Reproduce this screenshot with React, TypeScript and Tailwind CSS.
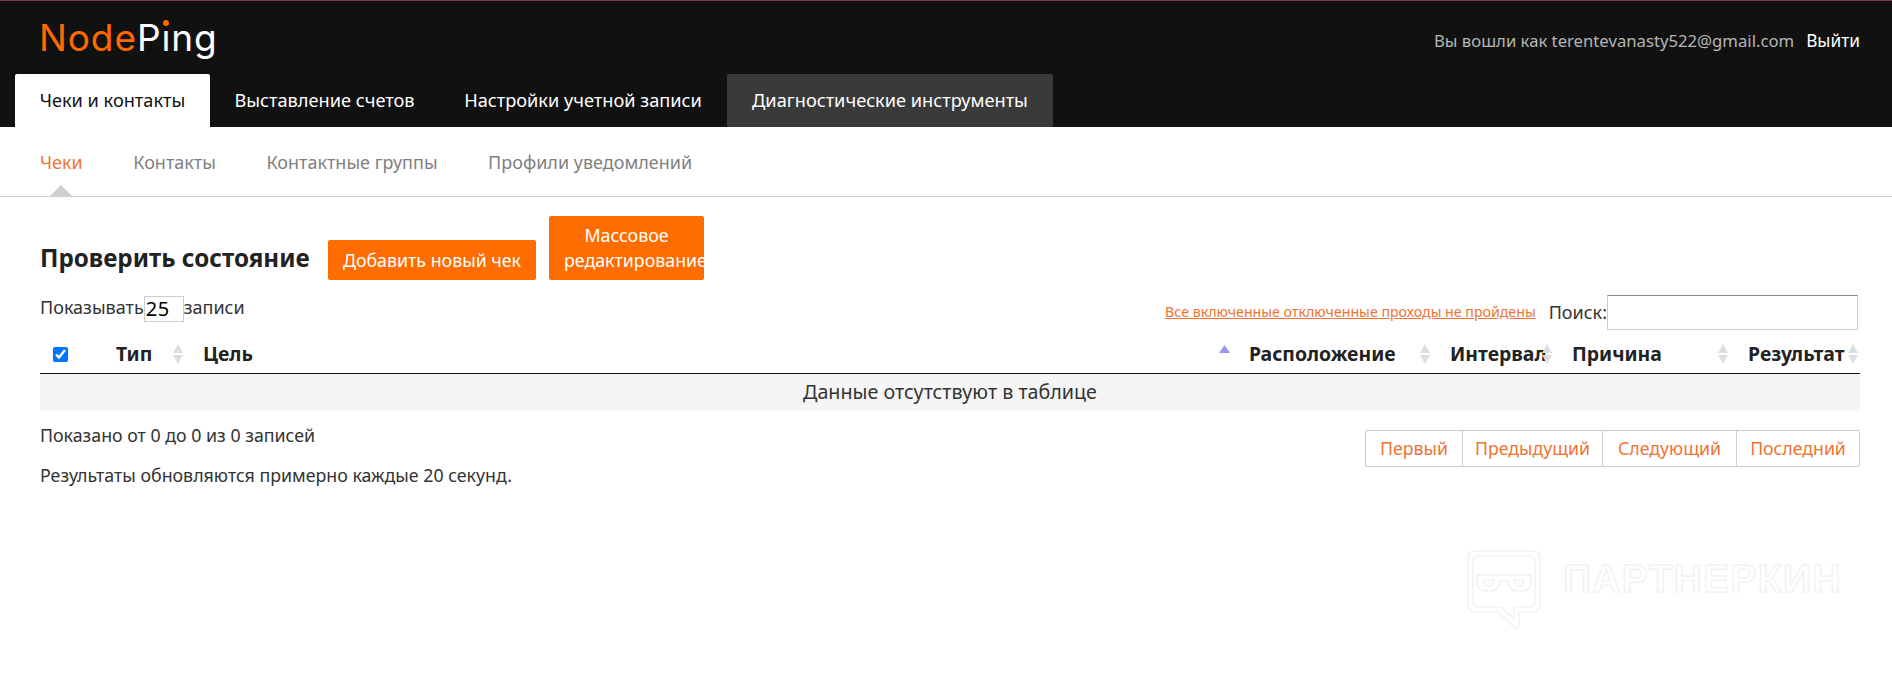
import React from "react";

const font = { fontFamily: '"Noto Sans", "Open Sans", sans-serif' };

function Sort({ active = false }: { active?: boolean }) {
  return active ? (
    <svg className="absolute right-[1px] top-[9px]" width="11" height="8" viewBox="0 0 11 8">
      <path d="M5.5 0 L11 8 H0 Z" fill="#9a9ae8" />
    </svg>
  ) : (
    <svg className="absolute right-[2px] top-[8px]" width="10" height="20" viewBox="0 0 10 20">
      <path d="M5 0 L10 9 H0 Z" fill="#dedede" />
      <path d="M0 11 H10 L5 20 Z" fill="#dedede" />
    </svg>
  );
}

function Th({ children, w, active }: { children: React.ReactNode; w: string; active?: boolean }) {
  return (
    <th className={`relative ${w} border-b border-b-[#111] pl-[18px] pb-[2px] text-left font-bold text-[19.4px] text-[#222] whitespace-nowrap overflow-visible`}>
      {children}
      <Sort active={active} />
    </th>
  );
}

function Watermark() {
  return (
    <div className="absolute left-[1467px] top-[550px] flex items-start gap-[22px] pointer-events-none">
      <svg width="74" height="80" viewBox="0 0 74 80" fill="none" stroke="#eeeeee" strokeWidth="1.2">
        <path d="M8 1 H66 Q73 1 73 8 V55 Q73 62 66 62 H52 V76 Q52 81 47 77 L31 62 H8 Q1 62 1 55 V8 Q1 1 8 1 Z" />
        <path d="M11 6 H63 Q68 6 68 11 V52 Q68 57 63 57 H47 V69 L34 57 H11 Q6 57 6 52 V11 Q6 6 11 6 Z" />
        <path d="M10 25 H64 V33 Q64 41 54 41 H50 Q42 41 41 31 H33 Q32 41 24 41 H20 Q10 41 10 33 Z" />
        <path d="M17 30 H27 Q26 36 22 36 Q18 36 17 30 Z" />
        <path d="M47 30 H57 Q56 36 52 36 Q48 36 47 30 Z" />
      </svg>
      <span
        className="mt-[7px] text-[39px] leading-[44px] font-bold text-white tracking-[1.3px] [-webkit-text-stroke:1px_#eeeeee] whitespace-nowrap"
        style={{ fontFamily: '"Liberation Sans", sans-serif' }}
      >
        ПАРТНЕРКИН
      </span>
    </div>
  );
}

export default function App() {
  return (
    <div className="relative min-h-[682px] bg-white text-[#333]" style={font}>
      <header className="h-[127px] bg-[#111111] border-t border-t-[#7c3b47] flex flex-col justify-between">
        <div className="flex justify-between pl-[40px] pr-[32px]">
          <div className="relative -ml-[1px] mt-[15px] text-[37px] leading-[44px] tracking-[0.9px] whitespace-nowrap" style={{ fontFamily: "Inter, sans-serif", fontWeight: 400 }}>
            <span className="text-[#ff6a00]">Node</span>
            <span className="text-white">Pıng</span>
            <span className="absolute left-[124px] top-[4px] w-[6px] h-[6px] rounded-full bg-[#ff6a00]" />
          </div>
          <div className="mt-[28px] text-[16.7px] leading-[24px] text-[#b5b5b5] whitespace-nowrap">
            Вы вошли как terentevanasty522@gmail.com
            <span className="text-white ml-[12px] text-[17.3px]">Выйти</span>
          </div>
        </div>
        <nav className="flex items-stretch h-[53px] pl-[15px] text-[18.2px] whitespace-nowrap">
          <div className="w-[195px] flex items-center justify-center bg-white text-[#111] rounded-t-[2px]">Чеки и контакты</div>
          <div className="w-[229px] flex items-center justify-center text-white">Выставление счетов</div>
          <div className="w-[288px] flex items-center justify-center text-white">Настройки учетной записи</div>
          <div className="w-[326px] flex items-center justify-center text-white bg-[#3a3a3a] rounded-t-[2px]">Диагностические инструменты</div>
        </nav>
      </header>

      <nav className="relative h-[70px] border-b border-b-[#cfcfcf] flex items-start pl-[40px] pt-[22px] gap-[50.5px] text-[18px] leading-[26px] text-[#808080]">
        <span className="text-[#ee7433]">Чеки</span>
        <span>Контакты</span>
        <span>Контактные группы</span>
        <span>Профили уведомлений</span>
        <div className="absolute left-[50px] bottom-0 w-0 h-0 border-x-[11px] border-x-transparent border-b-[11px] border-b-[#cfcfcf]" />
      </nav>

      <main className="pl-[40px] pr-[32px]">
        <div className="flex items-end mt-[19px] h-[64px]">
          <h1 className="text-[24.2px] leading-[32px] font-bold text-[#222] mb-[6px] w-[288px] whitespace-nowrap">Проверить состояние</h1>
          <button className="w-[208px] h-[40px] bg-[#ff6c00] text-white text-[17.8px] rounded-[2px] whitespace-nowrap">Добавить новый чек</button>
          <button className="ml-[13px] w-[155px] h-[64px] bg-[#ff6c00] text-white text-[17.8px] leading-[25px] rounded-[2px] px-[15px] text-center overflow-hidden">Массовое редактирование</button>
        </div>

        <div className="flex justify-between items-start mt-[15px] h-[35px] pr-[2px]">
          <div className="flex items-start text-[18px] leading-[24px]">
            <span>Показывать</span>
            <span className="w-[40px] h-[26px] mt-[1px] border border-[#ccc] text-[20px] leading-[24px] text-black pl-[1px] tracking-[0.5px]">25</span>
            <span>записи</span>
          </div>
          <div className="flex items-start">
            <a className="text-[#ee7433] underline text-[14.2px] leading-[20px] mt-[7px] mr-[13px] whitespace-nowrap">Все включенные отключенные проходы не пройдены</a>
            <span className="text-[18px] leading-[24px] mt-[5px]">Поиск:</span>
            <div className="w-[251px] h-[35px] border border-[#ccc] border-t-[#8a8a8a]" />
          </div>
        </div>

        <table className="mt-[6px] w-[1820px] table-fixed border-separate border-spacing-0">
          <thead>
            <tr className="h-[38px]">
              <th className="w-[58px] text-left pl-[13px] border-b border-b-[#111]">
                <input type="checkbox" defaultChecked className="block w-[15px] h-[15px] accent-[#0075ff] mb-[1px]" />
              </th>
              <Th w="w-[87px]">Тип</Th>
              <Th w="w-[1046px]" active>Цель</Th>
              <Th w="w-[201px]">Расположение</Th>
              <Th w="w-[122px]">Интервал</Th>
              <Th w="w-[176px]">Причина</Th>
              <Th w="w-[130px]">Результат</Th>
            </tr>
          </thead>
          <tbody>
            <tr className="h-[37px] bg-[#f5f5f5]">
              <td colSpan={7} className="text-center text-[19.7px] text-[#333] pb-[2px]">Данные отсутствуют в таблице</td>
            </tr>
          </tbody>
        </table>

        <div className="flex justify-between items-start">
          <div className="text-[17.8px] leading-[24px] pt-[12px]">
            <p>Показано от 0 до 0 из 0 записей</p>
            <p className="mt-[16px]">Результаты обновляются примерно каждые 20 секунд.</p>
          </div>
          <div className="mt-[19px] flex h-[37px] border border-[#c9c9c9] rounded-[2px] text-[17.7px] text-[#ee7433] whitespace-nowrap">
            <span className="w-[97px] flex items-center justify-center border-r border-r-[#d0d0d0]">Первый</span>
            <span className="w-[140px] flex items-center justify-center border-r border-r-[#d0d0d0]">Предыдущий</span>
            <span className="w-[134px] flex items-center justify-center border-r border-r-[#d0d0d0]">Следующий</span>
            <span className="w-[122px] flex items-center justify-center">Последний</span>
          </div>
        </div>
      </main>

      <Watermark />
    </div>
  );
}
